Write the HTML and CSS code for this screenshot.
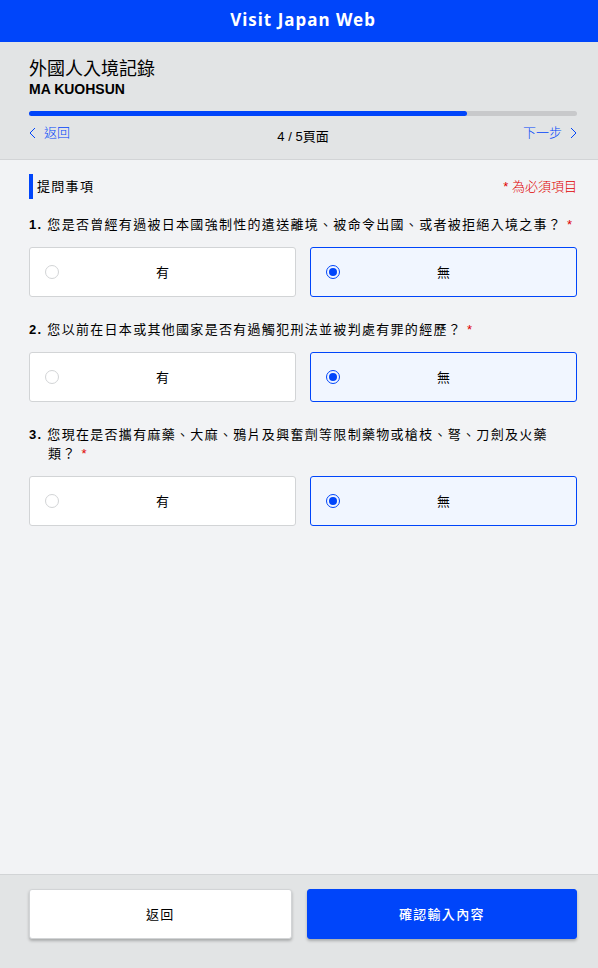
FILE: index.html
```html
<!DOCTYPE html>
<html lang="zh-Hant">
<head>
<meta charset="utf-8">
<meta name="viewport" content="width=device-width, initial-scale=1">
<title>Visit Japan Web</title>
<link rel="stylesheet" href="styles.css">
</head>
<body>
<header class="brand">Visit Japan Web</header>
<section class="summary">
  <h1 class="summary-title">外國人入境記錄</h1>
  <p class="summary-name">MA KUOHSUN</p>
  <div class="progress"><div class="progress-fill"></div></div>
  <nav class="steps">
    <a class="step" href="#"><svg class="chevron" viewBox="0 0 7 12"><path d="M6 1 1 6l5 5"/></svg>返回</a>
    <span class="step-count">4 / 5頁面</span>
    <a class="step step-next" href="#">下一步<svg class="chevron" viewBox="0 0 7 12"><path d="m1 1 5 5-5 5"/></svg></a>
  </nav>
</section>
<main class="content">
  <div class="section-head">
    <h2 class="section-title">提問事項</h2>
    <p class="required-note">* 為必須項目</p>
  </div>
  <form class="questions" id="questions">
    <div class="question" role="radiogroup" aria-labelledby="q1">
      <p class="question-text" id="q1"><b>1.</b> 您是否曾經有過被日本國強制性的遣送離境、被命令出國、或者被拒絕入境之事？ <span class="star">*</span></p>
      <div class="options">
        <label class="option"><input class="radio" type="radio" name="q1"><span>有</span></label>
        <label class="option"><input class="radio" type="radio" name="q1" checked><span>無</span></label>
      </div>
    </div>
    <div class="question" role="radiogroup" aria-labelledby="q2">
      <p class="question-text" id="q2"><b>2.</b> 您以前在日本或其他國家是否有過觸犯刑法並被判處有罪的經歷？ <span class="star">*</span></p>
      <div class="options">
        <label class="option"><input class="radio" type="radio" name="q2"><span>有</span></label>
        <label class="option"><input class="radio" type="radio" name="q2" checked><span>無</span></label>
      </div>
    </div>
    <div class="question" role="radiogroup" aria-labelledby="q3">
      <p class="question-text" id="q3"><b>3.</b> 您現在是否攜有麻藥、大麻、鴉片及興奮劑等限制藥物或槍枝、弩、刀劍及火藥<span class="keep">類？ <span class="star">*</span></span></p>
      <div class="options">
        <label class="option"><input class="radio" type="radio" name="q3"><span>有</span></label>
        <label class="option"><input class="radio" type="radio" name="q3" checked><span>無</span></label>
      </div>
    </div>
  </form>
</main>
<footer class="actions">
  <button class="button" type="button">返回</button>
  <button class="button button-primary" type="submit" form="questions">確認輸入內容</button>
</footer>
</body>
</html>
```
FILE: styles.css
```css
:root {
  --blue: #0045fa;
  --panel: #e2e4e5;
  --line: #d2d4d6;
  --red: #e00000;
  --tracking: 0.1em;
}

* {
  box-sizing: border-box;
}

body {
  display: flex;
  flex-direction: column;
  min-height: 100vh;
  margin: 0;
  background: #f2f3f5;
  color: #000;
  font: 13px/19px "Liberation Sans", "Noto Sans CJK TC", sans-serif;
}

h1,
h2,
p {
  margin: 0;
  font-weight: 400;
}

.brand,
.summary,
.content,
.actions {
  padding-left: 29px;
  padding-right: 21px;
}

.brand {
  height: 42px;
  background: var(--blue);
  color: #fff;
  font: 700 17px/39px "Noto Sans", sans-serif;
  letter-spacing: 1px;
  text-align: center;
}

.summary {
  height: 118px;
  padding-top: 15px;
  border-bottom: 1px solid var(--line);
  background: var(--panel);
}

.summary-title {
  font-size: 18px;
  line-height: 24px;
}

.summary-name {
  font-size: 14px;
  font-weight: 700;
  line-height: 17px;
}

.progress {
  height: 5px;
  margin-top: 13px;
  border-radius: 3px;
  background: #c8c9cb;
}

.progress-fill {
  width: 80%;
  height: 100%;
  border-radius: 3px;
  background: var(--blue);
}

.steps {
  display: grid;
  grid-template-columns: 1fr auto 1fr;
  margin-top: 7px;
}

.step {
  display: flex;
  align-items: center;
  align-self: start;
  gap: 8px;
  color: var(--blue);
  font-weight: 300;
  text-decoration: none;
}

.step-next {
  justify-content: flex-end;
}

.step-count {
  padding-top: 4px;
}

.chevron {
  width: 7px;
  height: 12px;
  fill: none;
  stroke: currentColor;
}

.content {
  flex: 1;
  padding-top: 14px;
  padding-bottom: 24px;
}

.section-head {
  display: flex;
  justify-content: space-between;
  line-height: 25px;
}

.section-title {
  padding-left: 4px;
  border-left: 4px solid var(--blue);
  font-size: 13px;
  letter-spacing: var(--tracking);
}

.required-note {
  color: var(--red);
  font-weight: 300;
}

.questions {
  display: grid;
  gap: 23px;
  margin-top: 16px;
}

.question-text {
  padding-left: 19px;
  text-indent: -19px;
  letter-spacing: var(--tracking);
}

.star {
  color: var(--red);
}

.keep {
  white-space: nowrap;
}

.options {
  display: grid;
  grid-template-columns: 1fr 1fr;
  gap: 14px;
  margin-top: 13px;
}

.option {
  display: grid;
  grid-template-columns: 14px 1fr 14px;
  align-items: center;
  height: 50px;
  padding: 0 15px;
  border: 1px solid var(--line);
  border-radius: 3px;
  background: #fff;
  text-align: center;
  text-indent: 0;
}

.option:has(:checked) {
  border-color: var(--blue);
  background: #f1f6ff;
}

.radio {
  appearance: none;
  width: 14px;
  height: 14px;
  margin: 0;
  border: 1px solid var(--line);
  border-radius: 50%;
  background: #fff;
}

.radio:checked {
  padding: 2px;
  border-color: var(--blue);
  background: var(--blue) content-box;
}

.actions {
  display: grid;
  grid-template-columns: 35fr 36fr;
  gap: 15px;
  padding-top: 14px;
  padding-bottom: 29px;
  border-top: 1px solid var(--line);
  background: var(--panel);
}

.button {
  height: 50px;
  border: 1px solid var(--line);
  border-radius: 3px;
  background: #fff;
  box-shadow: 0 2px 3px rgb(0 0 0 / 25%);
  color: #000;
  font: inherit;
  letter-spacing: var(--tracking);
}

.button-primary {
  border-color: var(--blue);
  background: var(--blue);
  color: #fff;
  font-weight: 500;
}
```
